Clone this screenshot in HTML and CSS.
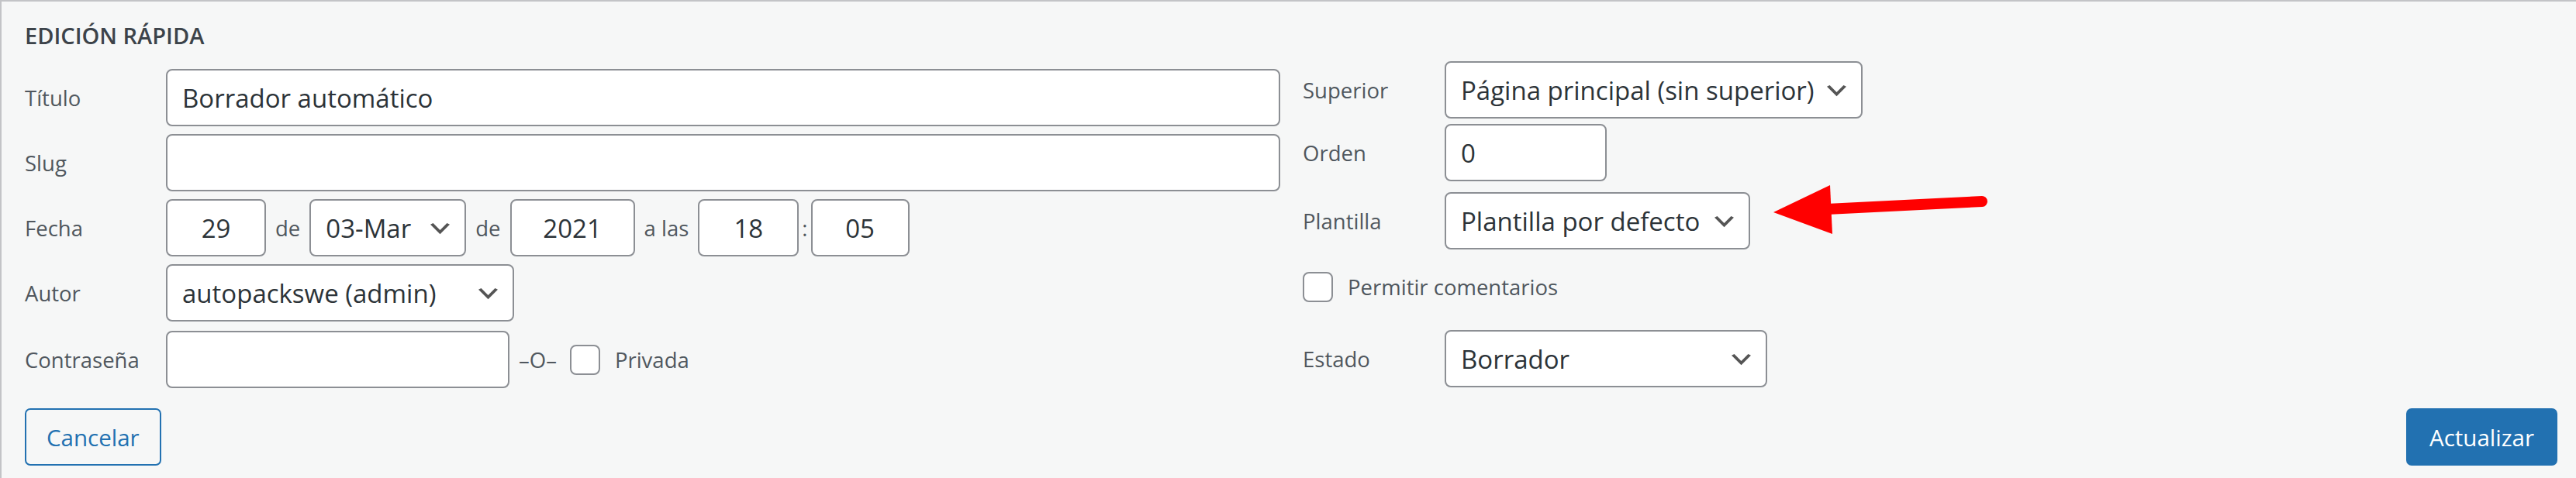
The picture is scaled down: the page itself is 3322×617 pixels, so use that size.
FILE: index.html
```html
<!DOCTYPE html>
<html lang="es">
<head>
<meta charset="utf-8">
<title>Edición rápida</title>
<link rel="stylesheet" href="styles.css">
</head>
<body>
<div class="panel">
  <div class="legend">EDICIÓN RÁPIDA</div>
  <div class="cols">
    <div class="col-left">
      <div class="row">
        <span class="lbl">Título</span>
        <input class="txt wide" type="text" value="Borrador automático">
      </div>
      <div class="row">
        <span class="lbl">Slug</span>
        <input class="txt wide" type="text" value="">
      </div>
      <div class="row">
        <span class="lbl">Fecha</span>
        <input class="txt num w-day" type="text" value="29">
        <span class="sep">de</span>
        <span class="sel w-month">
          <select><option>03-Mar</option></select>
          <svg class="chev" viewBox="3 6 14 8"><path d="M5 6l5 5 5-5 2 1-7 7-7-7 2-1z"/></svg>
        </span>
        <span class="sep">de</span>
        <input class="txt num w-year" type="text" value="2021">
        <span class="sep">a las</span>
        <input class="txt num w-hour" type="text" value="18">
        <span class="colon">:</span>
        <input class="txt num w-min" type="text" value="05">
      </div>
      <div class="row">
        <span class="lbl">Autor</span>
        <span class="sel w-author">
          <select><option>autopackswe (admin)</option></select>
          <svg class="chev" viewBox="3 6 14 8"><path d="M5 6l5 5 5-5 2 1-7 7-7-7 2-1z"/></svg>
        </span>
      </div>
      <div class="row row-pass">
        <span class="lbl">Contraseña</span>
        <input class="txt w-pass" type="text" value="">
        <span class="or">–O–</span>
        <input class="chk" type="checkbox">
        <span class="chk-text">Privada</span>
      </div>
    </div>
    <div class="col-right">
      <div class="row">
        <span class="lbl lbl-r">Superior</span>
        <span class="sel w-parent">
          <select><option>Página principal (sin superior)</option></select>
          <svg class="chev" viewBox="3 6 14 8"><path d="M5 6l5 5 5-5 2 1-7 7-7-7 2-1z"/></svg>
        </span>
      </div>
      <div class="row r-order">
        <span class="lbl lbl-r">Orden</span>
        <input class="txt w-order" type="text" value="0">
      </div>
      <div class="row r-template">
        <span class="lbl lbl-r">Plantilla</span>
        <span class="sel w-template">
          <select><option>Plantilla por defecto</option></select>
          <svg class="chev" viewBox="3 6 14 8"><path d="M5 6l5 5 5-5 2 1-7 7-7-7 2-1z"/></svg>
        </span>
      </div>
      <div class="check-row">
        <input class="chk" type="checkbox">
        <span class="chk-text">Permitir comentarios</span>
      </div>
      <div class="row r-status">
        <span class="lbl lbl-r">Estado</span>
        <span class="sel w-status">
          <select><option>Borrador</option></select>
          <svg class="chev" viewBox="3 6 14 8"><path d="M5 6l5 5 5-5 2 1-7 7-7-7 2-1z"/></svg>
        </span>
      </div>
    </div>
  </div>
  <div class="actions">
    <button class="btn btn-secondary" type="button">Cancelar</button>
    <button class="btn btn-primary" type="button">Actualizar</button>
  </div>
  <svg class="arrow" viewBox="0 0 300 80">
    <path class="arrow-shaft" d="M76 40 L276 30"/>
    <polygon class="arrow-head" points="7,44 80,9 83,72"/>
  </svg>
</div>
</body>
</html>
```
FILE: styles.css
```css
html, body {
  margin: 0;
  padding: 0;
  background: #f6f7f7;
}

body {
  font-family: "Open Sans", "Noto Sans", sans-serif;
}

.panel {
  position: relative;
  box-sizing: border-box;
  height: 617px;
  background: #f6f7f7;
  border-top: 2px solid #c3c4c7;
  border-left: 2px solid #c3c4c7;
  padding: 24px 24px 0 30px;
}

.legend {
  height: 40px;
  line-height: 40px;
  font-size: 29px;
  font-weight: 600;
  color: #3c434a;
  margin-bottom: 13px;
}

.cols {
  display: grid;
  grid-template-columns: 1619px 1fr;
  column-gap: 29px;
}

.col-left {
  padding-top: 10px;
  display: flex;
  flex-direction: column;
  gap: 10px;
}

.col-right {
  display: flex;
  flex-direction: column;
}

.row {
  display: flex;
  align-items: center;
  height: 74px;
}

.row-pass {
  margin-top: 2px;
}

.r-order {
  margin-top: 7px;
}

.r-template {
  margin-top: 14px;
}

.r-status {
  margin-top: 36px;
}

.check-row {
  display: flex;
  align-items: center;
  height: 39px;
  margin-top: 29px;
}

.lbl {
  flex: none;
  width: 182px;
  font-size: 27.5px;
  color: #50575e;
}

.lbl-r {
  width: 183px;
}

.txt {
  flex: none;
  box-sizing: border-box;
  height: 74px;
  margin: 0;
  border: 2px solid #8c8f94;
  border-radius: 8px;
  background: #fff;
  font-family: "Open Sans", "Noto Sans", sans-serif;
  font-size: 33px;
  color: #2c3338;
  padding: 0 19px;
  outline: none;
}

.num {
  text-align: center;
  padding: 0;
}

.wide { width: 1437px; }
.w-day { width: 129px; }
.w-year { width: 161px; }
.w-hour { width: 130px; }
.w-min { width: 127px; }
.w-pass { width: 443px; }
.w-order { width: 209px; }

.sep {
  flex: none;
  margin: 0 12px;
  font-size: 27.5px;
  color: #50575e;
}

.colon {
  flex: none;
  margin: 0 4px;
  font-size: 27.5px;
  color: #50575e;
}

.or {
  flex: none;
  margin: 0 17px 0 12px;
  font-size: 27.5px;
  color: #50575e;
}

.sel {
  position: relative;
  flex: none;
  display: block;
  height: 74px;
}

.sel select {
  -webkit-appearance: none;
  appearance: none;
  box-sizing: border-box;
  display: block;
  width: 100%;
  height: 74px;
  margin: 0;
  border: 2px solid #8c8f94;
  border-radius: 8px;
  background: #fff;
  font-family: "Open Sans", "Noto Sans", sans-serif;
  font-size: 33px;
  color: #2c3338;
  padding: 0 44px 0 19px;
  outline: none;
}

.chev {
  position: absolute;
  right: 21px;
  top: 50%;
  width: 25px;
  height: 14.4px;
  margin-top: -5.7px;
  fill: #555555;
  pointer-events: none;
}

.w-month { width: 202px; }
.w-author { width: 449px; }
.w-parent { width: 539px; }
.w-template { width: 394px; }
.w-status { width: 416px; }

.chk {
  -webkit-appearance: none;
  appearance: none;
  flex: none;
  box-sizing: border-box;
  width: 39px;
  height: 39px;
  margin: 0;
  border: 2px solid #8c8f94;
  border-radius: 8px;
  background: #fff;
}

.chk-text {
  flex: none;
  margin-left: 19px;
  font-size: 27.5px;
  color: #50575e;
}

.actions {
  display: flex;
  justify-content: space-between;
  margin-top: 26px;
}

.btn {
  box-sizing: border-box;
  height: 74px;
  margin: 0;
  border: 2px solid #2271b1;
  border-radius: 7px;
  font-family: "Open Sans", "Noto Sans", sans-serif;
  font-size: 29.5px;
  padding: 0 26px;
  cursor: pointer;
}

.btn-secondary {
  background: #f6f7f7;
  color: #2271b1;
}

.btn-primary {
  background: #2271b1;
  color: #ffffff;
  padding: 0 28px;
}

.arrow {
  position: absolute;
  left: 2278px;
  top: 228px;
  width: 300px;
  height: 80px;
  overflow: visible;
}

.arrow-shaft {
  fill: none;
  stroke: #ff0000;
  stroke-width: 14;
  stroke-linecap: round;
}

.arrow-head {
  fill: #ff0000;
}
```
